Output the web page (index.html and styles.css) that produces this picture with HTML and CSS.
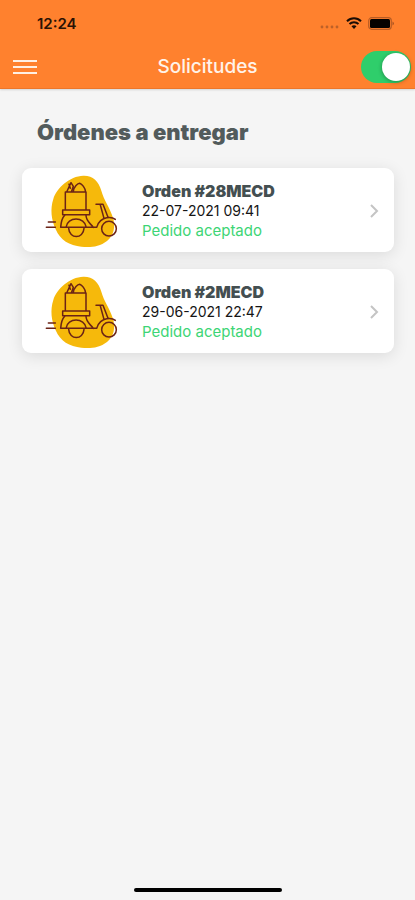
FILE: index.html
```html
<!DOCTYPE html>
<html lang="es">
<head>
<meta charset="utf-8">
<meta name="viewport" content="width=device-width, initial-scale=1">
<title>Solicitudes</title>
<link rel="stylesheet" href="styles.css">
</head>
<body>
<svg class="defs" aria-hidden="true">
  <symbol id="scooter" viewBox="45 27 222 219">
    <path fill="#f6b90b" d="M160 29C188 28 206 45 214 74C221 101 240 126 249 155C257 180 252 208 231 225C207 244 177 245 154 242C119 240 90 222 77 190C64 161 60 130 70 99C79 67 119 30 160 29Z"/>
    <g fill="none" stroke="#6b2316" stroke-width="4.5" stroke-linecap="round" stroke-linejoin="round">
      <path d="M106 132V78H168V132M98 132H179V146H98ZM110 78L123 50L130 61L124 78M117 55L121 67M130 76C132 62 143 52 149 52C156 54 166 66 167 78"/>
      <path d="M104 148C95 157 93 171 92 184H200M108 184C112 151 164 151 169 184M116 187C118 220 160 220 162 187M168 148C168 165 180 171 190 184M200 184C204 167 218 157 230 155C241 153 250 155 256 160M198 115H219L234 154M211 117L222 157"/>
      <circle cx="237" cy="188" r="22"/>
      <path d="M55 168H76M49 184H76"/>
    </g>
  </symbol>
  <symbol id="chevron" viewBox="0 0 10 16">
    <path d="M2 2L8 8L2 14" fill="none" stroke="#c4c4c4" stroke-width="2"/>
  </symbol>
</svg>
<header class="top">
  <div class="status">
    <span class="time">12:24</span>
    <span class="signals">
      <svg width="20" height="4" viewBox="0 0 20 4" fill="#bd6128" aria-hidden="true"><circle cx="2" cy="2" r="1.4"/><circle cx="7" cy="2" r="1.4"/><circle cx="12" cy="2" r="1.4"/><circle cx="17" cy="2" r="1.4"/></svg>
      <svg width="16" height="12" viewBox="0 0 16 12" aria-hidden="true"><g fill="none" stroke="#1b0d05" stroke-width="2"><path d="M1 4.3C5 .3 11 .3 15 4.3M3.5 7C6 4.5 10 4.5 12.500 7"/></g><path fill="#1b0d05" d="M8 12L5.500 9.300C7 8 9 8 10.500 9.300Z"/></svg>
      <svg width="27" height="13" viewBox="0 0 27 13" aria-hidden="true"><rect x=".7" y=".7" width="22.600" height="11.600" rx="3" fill="none" stroke="#b85c24" stroke-width="1.200"/><rect x="2" y="2" width="20" height="9" rx="1.500" fill="#050200"/><path d="M24.500 4.500C26.500 5.500 26.500 7.500 24.500 8.500Z" fill="#a85322"/></svg>
    </span>
  </div>
  <div class="bar">
    <button class="menu" aria-label="Menú"><svg width="24" height="16" viewBox="0 0 24 16" aria-hidden="true"><path d="M0 2H24M0 8H24M0 14H24" stroke="#fff0e4" stroke-width="2"/></svg></button>
    <h1 class="title">Solicitudes</h1>
    <input class="toggle" type="checkbox" role="switch" aria-label="Disponible" checked>
  </div>
</header>
<main class="content">
  <h2 class="heading">Órdenes a entregar</h2>
  <div class="orders">
    <a class="card" href="#28MECD">
      <svg class="picture" aria-hidden="true"><use href="#scooter"/></svg>
      <span class="details">
        <strong class="name">Orden #28MECD</strong>
        <span class="date">22-07-2021 09:41</span>
        <span class="state">Pedido aceptado</span>
      </span>
      <svg class="chevron" aria-hidden="true"><use href="#chevron"/></svg>
    </a>
    <a class="card" href="#2MECD">
      <svg class="picture" aria-hidden="true"><use href="#scooter"/></svg>
      <span class="details">
        <strong class="name">Orden #2MECD</strong>
        <span class="date">29-06-2021 22:47</span>
        <span class="state">Pedido aceptado</span>
      </span>
      <svg class="chevron" aria-hidden="true"><use href="#chevron"/></svg>
    </a>
  </div>
</main>
<div class="home"></div>
</body>
</html>
```
FILE: styles.css
```css
* { box-sizing: border-box; }
body {
  margin: 0;
  min-height: 100vh;
  display: flex;
  flex-direction: column;
  background: #f5f5f5;
  color: #151515;
  font-family: Inter, "Open Sans", sans-serif;
}
.defs { position: absolute; width: 0; height: 0; }
.top {
  background: #ff812e;
  border-bottom: 1px solid #ed7629;
  box-shadow: 0 1px 2px #0002;
}
.status {
  height: 46px;
  padding: 0 20px 0 37px;
  display: flex;
  align-items: center;
  justify-content: space-between;
}
.time { font-size: 15px; font-weight: 600; color: #2b1204; }
.signals { display: flex; align-items: center; gap: 6px; }
.signals svg:first-child { margin-top: 8px; }
.bar {
  height: 42px;
  padding: 0 4px 0 13px;
  display: grid;
  grid-template-columns: 41px 1fr 50px;
  align-items: center;
}
.menu { padding: 0; border: 0; background: none; display: flex; }
.title {
  margin: 0;
  text-align: center;
  color: #fff3ea;
  font-size: 19px;
  line-height: 24px;
  font-weight: 500;
}
.toggle {
  appearance: none;
  margin: 0;
  width: 50px;
  height: 32px;
  padding: 2px 1px;
  display: flex;
  justify-content: flex-end;
  border-radius: 16px;
  background: #9a9a9a;
}
.toggle:checked { background: #2fce6b; }
.toggle::before {
  content: "";
  width: 28px;
  height: 28px;
  border-radius: 50%;
  background: #fff;
  box-shadow: 0 1px 4px #0005;
}
.toggle:not(:checked) { justify-content: flex-start; }
.content { flex: 1; padding: 27px 21px 28px 22px; }
.heading {
  margin: 0 0 20px 15px;
  color: #525b5c;
  font-size: 22px;
  line-height: 32px;
  font-weight: 900;
}
.orders { display: grid; gap: 17px; }
.card {
  min-height: 84px;
  padding: 6px 15px 4px 23px;
  display: flex;
  align-items: center;
  background: #fff;
  border-radius: 9px;
  box-shadow: 0 3px 16px #0000001c;
  color: inherit;
  text-decoration: none;
}
.picture { width: 74px; height: 73px; flex: none; }
.details { flex: 1; margin-left: 23px; display: flex; flex-direction: column; }
.name { color: #444f51; font-size: 16px; line-height: 20px; font-weight: 900; }
.date { font-size: 14px; line-height: 20px; }
.state { font-size: 15px; line-height: 20px; color: #3dd575; }
.chevron { width: 10px; height: 16px; flex: none; }
.home {
  width: 148px;
  height: 4px;
  margin: 0 auto 8px;
  border-radius: 2px;
  background: #000;
}
```
